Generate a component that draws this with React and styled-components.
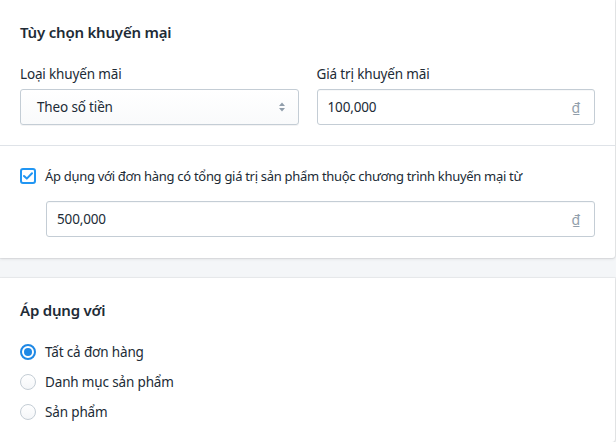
import React from "react";
import styled, { createGlobalStyle } from "styled-components";

const Global = createGlobalStyle`
  html, body { margin: 0; padding: 0; background: #f4f6f8; }
  body { font-family: "Noto Sans", "Open Sans", sans-serif; color: #212b36; font-size: 13px; letter-spacing: -0.15px; }
  * { box-sizing: border-box; }
`;

const Page = styled.div`
  width: 615px;
  display: flex;
  flex-direction: column;
  gap: 20px;
  padding-bottom: 20px;
`;

const Card = styled.section`
  background: #fff;
  box-shadow: 0 0 0 1px rgba(63, 63, 68, 0.05), 0 1px 3px 0 rgba(63, 63, 68, 0.15);
  border-radius: 0 0 3px 0;
`;

const Section = styled.div`
  padding: 20px 20px ${(p) => (p.$last ? "21px" : "20px")};
  & + & { border-top: 1px solid #dfe3e8; }
`;

const Title = styled.h2`
  margin: 0;
  font-size: 15px;
  line-height: 24px;
  font-weight: 600;
  letter-spacing: -0.2px;
`;

const Grid = styled.div`
  display: grid;
  grid-template-columns: 1fr 1fr;
  column-gap: 18px;
  margin-top: 20px;
`;

const Field = styled.div`
  display: flex;
  flex-direction: column;
`;

const Label = styled.label`
  font-size: 13.5px;
  line-height: 20px;
  margin-bottom: 5px;
`;

const Box = styled.div`
  height: 36px;
  border: 1px solid #c4cdd5;
  border-radius: 3px;
  display: flex;
  align-items: center;
  padding: ${(p) => (p.$select ? "0 12px 0 16px" : "0 14px 0 10px")};
  background: ${(p) => (p.$select ? "linear-gradient(180deg, #fff, #f9fafb)" : "#fff")};
  box-shadow: ${(p) => (p.$select ? "0 1px 0 0 rgba(22,29,37,0.05)" : "inset 0 1px 0 0 rgba(99,115,129,0.05)")};
  margin-left: ${(p) => (p.$indent ? "26px" : "0")};
`;

const Value = styled.span`
  flex: 1;
  font-size: 13.5px;
  line-height: 20px;
`;

const Suffix = styled.span`
  color: #919eab;
  font-size: 14px;
`;

const CheckRow = styled.label`
  display: flex;
  align-items: center;
  gap: 9px;
  line-height: 20px;
  letter-spacing: -0.3px;
  margin-bottom: 15px;
`;

const CheckBox = styled.span`
  flex: none;
  width: 16px;
  height: 16px;
  border: 2px solid #2196f3;
  border-radius: 3px;
  display: flex;
  align-items: center;
  justify-content: center;
  background: #fff;
`;

const RadioList = styled.div`
  display: flex;
  flex-direction: column;
  gap: 10px;
  margin-top: 20px;
`;

const RadioRow = styled.label`
  display: flex;
  align-items: center;
  gap: 9px;
  font-size: 13.5px;
  line-height: 20px;
`;

const RadioDot = styled.span`
  width: 16px;
  height: 16px;
  border-radius: 50%;
  border: ${(p) => (p.$on ? "2px solid #1e88e5" : "1px solid #c4cdd5")};
  background: ${(p) => (p.$on ? "#fff" : "linear-gradient(180deg, #fff, #f4f6f8)")};
  display: flex;
  align-items: center;
  justify-content: center;
  &::after {
    content: "";
    display: ${(p) => (p.$on ? "block" : "none")};
    width: 8px;
    height: 8px;
    border-radius: 50%;
    background: #1e88e5;
  }
`;

const Arrows = () => (
  <svg width="8" height="12" viewBox="0 0 8 12">
    <path d="M4 1.5 L7 5 H1 Z" fill="#919eab" />
    <path d="M4 10.5 L7 7 H1 Z" fill="#919eab" />
  </svg>
);

export default function App() {
  return (
    <>
      <Global />
      <Page>
        <Card>
          <Section>
            <Title>Tùy chọn khuyến mại</Title>
            <Grid>
              <Field>
                <Label>Loại khuyến mãi</Label>
                <Box $select>
                  <Value>Theo số tiền</Value>
                  <Arrows />
                </Box>
              </Field>
              <Field>
                <Label>Giá trị khuyến mãi</Label>
                <Box>
                  <Value>100,000</Value>
                  <Suffix>₫</Suffix>
                </Box>
              </Field>
            </Grid>
          </Section>
          <Section $last>
            <CheckRow>
              <CheckBox>
                <svg width="10" height="8" viewBox="0 0 10 8">
                  <path d="M1 4 L3.8 6.6 L9 1.2" fill="none" stroke="#2196f3" strokeWidth="2" strokeLinecap="round" strokeLinejoin="round" />
                </svg>
              </CheckBox>
              Áp dụng với đơn hàng có tổng giá trị sản phẩm thuộc chương trình khuyến mại từ
            </CheckRow>
            <Box $indent>
              <Value>500,000</Value>
              <Suffix>₫</Suffix>
            </Box>
          </Section>
        </Card>
        <Card>
          <Section>
            <Title>Áp dụng với</Title>
            <RadioList>
              <RadioRow><RadioDot $on />Tất cả đơn hàng</RadioRow>
              <RadioRow><RadioDot />Danh mục sản phẩm</RadioRow>
              <RadioRow><RadioDot />Sản phẩm</RadioRow>
            </RadioList>
          </Section>
        </Card>
      </Page>
    </>
  );
}
